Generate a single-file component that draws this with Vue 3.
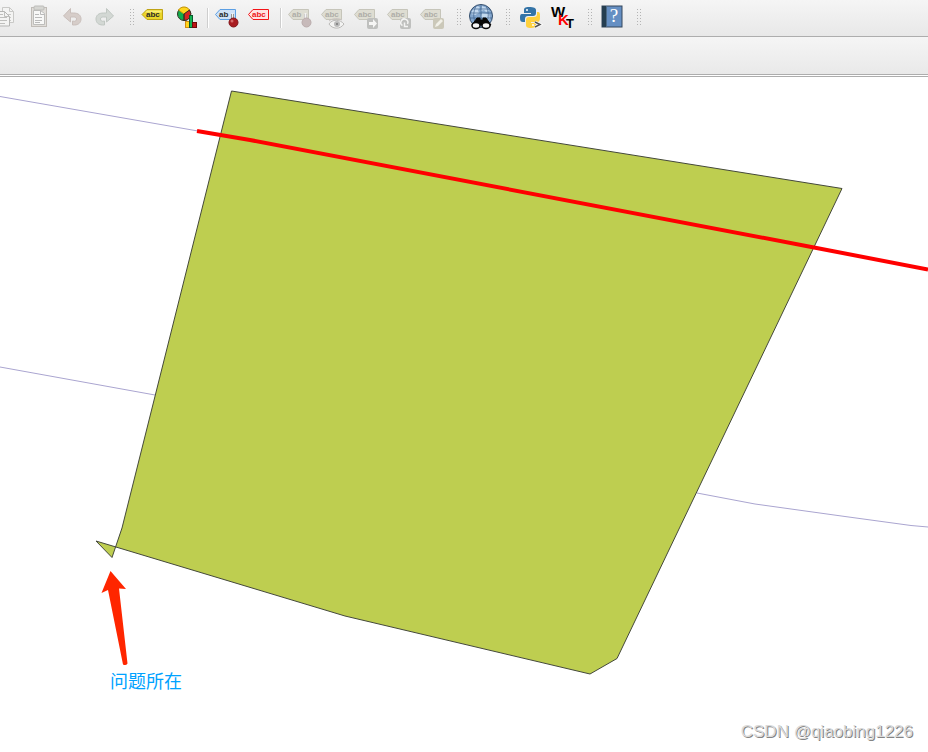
<script setup>
import { ref } from 'vue'

const items = [
  { id: 'copy', label: 'Copy Features', disabled: true },
  { id: 'paste', label: 'Paste Features', disabled: true },
  { id: 'undo', label: 'Undo', disabled: true },
  { id: 'redo', label: 'Redo', disabled: true },
  { id: 'h1', kind: 'handle' },
  { id: 'label', label: 'Layer Labeling Options' },
  { id: 'chart', label: 'Layer Diagram Options' },
  { id: 's1', kind: 'separator' },
  { id: 'pin', label: 'Highlight Pinned Labels' },
  { id: 'unplaced', label: 'Toggle Unplaced Labels' },
  { id: 's2', kind: 'separator' },
  { id: 'pinoff', label: 'Pin/Unpin Labels', disabled: true },
  { id: 'show', label: 'Show/Hide Labels', disabled: true },
  { id: 'move', label: 'Move Label', disabled: true },
  { id: 'rotate', label: 'Rotate Label', disabled: true },
  { id: 'edit', label: 'Change Label Properties', disabled: true },
  { id: 'h2', kind: 'handle' },
  { id: 'search', label: 'MetaSearch' },
  { id: 'h3', kind: 'handle' },
  { id: 'python', label: 'Python Console' },
  { id: 'wkt', label: 'Get WKT' },
  { id: 'h4', kind: 'handle' },
  { id: 'help', label: 'Help Contents' },
  { id: 'h5', kind: 'handle' },
]

const active = ref('')
const greyTags = ['pinoff', 'show', 'move', 'rotate', 'edit']
</script>

<template>
  <div class="app">
    <header class="toolbar" role="toolbar" aria-label="Main toolbar">
      <template v-for="item in items" :key="item.id">
        <span v-if="item.kind === 'handle'" class="handle"></span>
        <span v-else-if="item.kind === 'separator'" class="separator"></span>
        <button v-else class="tool" type="button" :aria-label="item.label" :disabled="item.disabled" @click="active = item.id">
          <svg class="icon" viewBox="0 0 33 36" aria-hidden="true">
            <g v-if="item.id === 'copy'" stroke="#c9c9c7" fill="#f4f4f3">
              <path d="M13.5 7.5h7l4 4v11h-11z" />
              <path d="M20.5 7.5v4h4M18 14.5h4M18 17.5h4M18 20.5h4" fill="none" />
              <path d="M8.500 11.500h7l5 5v9.500h-12z" stroke="#b5b5b3" />
              <path d="M15.500 11.500v5h5M10 14.500h4M10 17.500h8M10 20.500h8M10 23.500h6" fill="none" stroke="#bfbfbd" />
            </g>
            <g v-else-if="item.id === 'paste'">
              <rect x="9.500" y="7.500" width="15" height="19" fill="#e1deda" stroke="#c0bcb7" />
              <path d="M11.500 10.500h7l4 3v11h-11z" fill="#f8f8f7" stroke="#bdbdbb" />
              <rect x="12" y="6" width="10" height="4" rx="1" fill="#d6d6d2" stroke="#bcbcb9" />
              <path d="M18.500 10.500v4h4M13 14.500h4M13 17.500h7M13 20.500h7M13 22.500h5" fill="none" stroke="#bababa" />
            </g>
            <path v-else-if="item.id === 'undo'" d="M8.500 16 15.500 8.500v4.500h3c5 0 7.500 2.500 7.500 6s-2.500 6-6.500 6h-2v-4c3 1 4-.5 4-2s-1-2-3-2h-3v5z" fill="#d6cdc9" stroke="#c9bfbb" />
            <path v-else-if="item.id === 'redo'" d="M25.500 16 18.500 8.500v4.500h-3c-5 0-7.500 2.500-7.500 6s2.500 6 6.500 6h2v-4c-3 1-4-.5-4-2s1-2 3-2h3v5z" fill="#d3d8d4" stroke="#c0c7c2" />
            <g v-else-if="item.id === 'label'">
              <path d="M5 14.500 10 9.500h15.500v10H10z" fill="#ead529" stroke="#bfa315" />
              <path d="M10 10.500h14.500v2H8z" fill="#f8ed76" />
              <text x="9" y="17" class="tag-text">abc</text>
            </g>
            <g v-else-if="item.id === 'chart'" stroke="#353225">
              <circle cx="14" cy="14" r="6.500" fill="#11ac4c" />
              <path d="M14 14 8.500 10a6.500 6.500 0 0 1 11 0z" fill="#ffd51c" stroke="#c7960b" />
              <path d="m14 14 5.500-4a6.500 6.500 0 0 1-5.500 10.500z" fill="#d52423" />
              <path d="M14 14v6.500" fill="none" />
              <rect x="15.500" y="21.500" width="4" height="6" fill="#ffd51c" stroke="#d48b12" />
              <rect x="19.500" y="15.500" width="3" height="12" fill="#13b453" stroke="#08592c" />
              <rect x="22.500" y="22.500" width="4" height="5" fill="#bd1515" stroke="#6d0a0a" />
            </g>
            <g v-else-if="item.id === 'pin'">
              <path d="M5.500 14.500 10 9.500h15.500v10H10z" fill="#cfe1f6" stroke="#5b9fe4" />
              <text x="9" y="17" class="tag-text">ab</text>
              <path d="M22.500 14v6" stroke="#777" stroke-width="3" />
              <path d="M22.500 13v6" stroke="#f1f1f1" stroke-width="1.500" />
              <circle cx="23.500" cy="22.500" r="4.500" fill="#a91c21" stroke="#801419" />
              <circle cx="22" cy="21" r="1.500" fill="#d56a6a" />
            </g>
            <g v-else-if="item.id === 'unplaced'">
              <path d="M5.500 14.500 10 9.500h15.500v10H10z" fill="#ffe3e3" stroke="#f31418" />
              <text x="9" y="17" class="tag-text tag-red">abc</text>
            </g>
            <g v-else-if="greyTags.includes(item.id)">
              <path d="M5.500 14.500 10 9.500h15.500v10H10z" fill="#deddd2" stroke="#c6c5ba" />
              <text x="9" y="17" class="tag-text tag-grey">{{ item.id === 'pinoff' ? 'ab' : 'abc' }}</text>
              <g v-if="item.id === 'pinoff'">
                <path d="M22.500 14v6" stroke="#c3c1c1" stroke-width="3" />
                <path d="M22.500 13v6" stroke="#f4f4f4" stroke-width="1.500" />
                <circle cx="23.500" cy="22.500" r="4.500" fill="#c7baba" stroke="#baacac" />
              </g>
              <g v-else-if="item.id === 'show'">
                <path d="M13 24c3-5 11-5 15 0-4 6-12 5-15 0z" fill="#f3f3f2" stroke="#bab9b7" />
                <circle cx="21" cy="24" r="3" fill="#bababa" />
                <circle cx="21" cy="24" r="1" fill="#777" />
                <path d="M13 21c4-3 9-3 13-1" fill="none" stroke="#c9c3c1" />
              </g>
              <g v-else>
                <rect x="18" y="18" width="11" height="11" rx="2" :fill="item.id === 'edit' ? '#cbc8b9' : '#bfc0be'" />
                <path v-if="item.id === 'move'" d="M20 22h4v-3l4 4.500-4 4.500v-3h-4z" fill="#f6f6f5" />
                <path v-else-if="item.id === 'rotate'" d="M20.500 25.500a3.500 3.500 0 1 1 5-1.500M22.500 22.500v4h3.500" fill="none" stroke="#f4f4f3" stroke-width="1.500" />
                <path v-else d="m20 27 1-3 5-5 2 2-5 5z" fill="#f1f0e8" />
              </g>
            </g>
            <g v-else-if="item.id === 'search'">
              <circle cx="17" cy="16" r="11.500" fill="#83a6cd" stroke="#344d6b" />
              <path d="m9 9 5-3 2 2-2 2 1 3-4 2-4-1zM18 6l5 2 2 3-3 1-2-2-3 1zM18 13l7 1 1 5-5 2-4-4z" fill="#c3d9ef" />
              <path d="M6 13h22M6 18h22M8 9h18M17 5v20M12 6c-3 6-3 12 0 18M22 6c3 6 3 12 0 18" fill="none" stroke="#3e628d" stroke-width=".7" />
              <path d="M13 18h3v2h3v-2h3l5 7H8z" fill="#070707" stroke="#070707" stroke-linejoin="round" />
              <ellipse cx="12" cy="25.500" rx="4" ry="3" fill="#f5f5f5" stroke="#070707" stroke-width="1.500" />
              <ellipse cx="22" cy="25.500" rx="4" ry="3" fill="#f5f5f5" stroke="#070707" stroke-width="1.500" />
            </g>
            <g v-else-if="item.id === 'python'">
              <path d="M16 7c-4 0-5 1-5 3v3h7v1H9c-2 0-2 2-2 4 0 3 1 4 3 4h2v-3c0-2 1-3 3-3h5c2 0 3-1 3-3v-3c0-2-2-3-7-3z" fill="#3474a7" />
              <path d="M18 28c-4 0-5-1-5-3v-5c0-2 1-3 3-3h5c2 0 3-1 3-3v-2h1c2 0 2 2 2 5 0 4-1 5-3 5h-6v1h5v2c0 2-2 3-5 3z" fill="#ffd13d" />
              <circle cx="14" cy="10" r="1" fill="#fff" />
              <circle cx="20" cy="25" r="1" fill="#fff" />
              <path d="m22 22 5 2.500-5 2.500" fill="none" stroke="#fff" stroke-width="3" />
              <path d="m22 22 5 2.500-5 2.500" fill="none" stroke="#555" stroke-width="1.500" />
            </g>
            <g v-else-if="item.id === 'wkt'" class="wkt">
              <text x="5" y="17">W</text>
              <text x="12" y="25" class="wkt-red">K</text>
              <text x="20" y="28" class="wkt-small">T</text>
            </g>
            <g v-else-if="item.id === 'help'">
              <rect x="7" y="6" width="20" height="21" fill="#658fc3" stroke="#34475c" />
              <path d="M7 6h4v21H7z" fill="#253e50" />
              <path d="M11.500 6v21" stroke="#4b6986" />
              <text x="19" y="22" class="question">?</text>
            </g>
          </svg>
        </button>
      </template>
    </header>
    <div class="subbar"></div>
    <main class="canvas">
      <svg class="map" viewBox="0 77 928 675" role="img" aria-label="问题所在">
        <g fill="none" stroke="#aaa5d0">
          <path d="M0 96.500 198 131" />
          <path d="M0 367 155 395" />
          <path d="m697 493 58 11 90 12.500 66 9 17 1.500" />
        </g>
        <path d="M231.500 91 842 188.500 814 247 617 658.500 590 674 345 616 96 541l16 16.500L122 528z" fill="#bece50" stroke="#44483a" />
        <path d="m197 131 53 9 564 107.500L928 269.500" fill="none" stroke="#f00" stroke-width="4" />
        <path d="m110.500 571 15.500 18-7-.5 8.500 75q-1.500 2.500-4.500 1L108 590l-6.500 3z" fill="#ff2600" />
        <text x="110" y="688" class="note">问题所在</text>
      </svg>
      <span class="watermark">CSDN @qiaobing1226</span>
    </main>
  </div>
</template>

<style>
body {
  margin: 0;
  background: #fff;
}
</style>

<style scoped>
.app {
  overflow: hidden;
  font-family: "Liberation Sans", "Noto Sans CJK SC", sans-serif;
}
.toolbar {
  display: flex;
  height: 36px;
  padding-right: 12px;
  margin-left: -11px;
  border-bottom: 1px solid #adadad;
  background: linear-gradient(#f5f5f5, #e8e8e8);
}
.tool {
  flex: none;
  width: 33px;
  height: 36px;
  padding: 0;
  border: 0;
  background: none;
}
.icon {
  display: block;
  width: 33px;
  height: 36px;
}
.handle {
  flex: none;
  width: 6px;
  height: 18px;
  margin: 9px 1px 0 9px;
  background: conic-gradient(from 270deg at 1px 1px, #b4b4b4 90deg, transparent 0) 0 0 / 3px 3px;
}
.separator {
  flex: none;
  width: 1px;
  height: 20px;
  margin: 8px 1px 0 4px;
  border-right: 1px solid #fff;
  background: #cecece;
}
.tag-text {
  font: bold 8px "Liberation Sans", sans-serif;
  fill: #292929;
}
.tag-red {
  fill: #ed1519;
}
.tag-grey {
  fill: #aeada8;
}
.wkt {
  font: bold 15px "Liberation Sans", sans-serif;
}
.wkt-red {
  fill: #f00;
}
.wkt-small {
  font-size: 13px;
}
.question {
  font: 19px "Liberation Serif", serif;
  fill: #fff;
  text-anchor: middle;
}
.subbar {
  height: 37px;
  border-bottom: 1px solid #adadad;
  background: linear-gradient(#f5f5f5, #e9e9e9);
}
.canvas {
  position: relative;
  margin-top: 1px;
  border-top: 1px solid #adadad;
}
.map {
  display: block;
  width: 100%;
  height: auto;
}
.note {
  font: 18px "Noto Sans CJK SC", sans-serif;
  fill: #00a2ff;
}
.watermark {
  position: absolute;
  right: 15px;
  bottom: 7px;
  color: #dadada;
  font: 17px/26px "Liberation Sans", sans-serif;
  text-shadow: 1px 1px 0 #848484;
}
</style>
